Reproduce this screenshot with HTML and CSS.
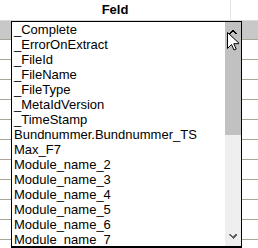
FILE: index.html
```html
<!DOCTYPE html>
<html lang="en">
<head>
    <meta charset="UTF-8">
    <title>Feld</title>
    <link rel="stylesheet" href="styles.css">
</head>
<body>
    <div class="grid">
        <div class="grid-head">
            <div class="cell cell-main">Feld</div>
            <div class="cell cell-rest"></div>
        </div>
        <div class="grid-row selected"></div>
        <div class="grid-row"></div>
        <div class="grid-row"></div>
        <div class="grid-row"></div>
        <div class="grid-row"></div>
        <div class="grid-row"></div>
        <div class="grid-row"></div>
        <div class="grid-row"></div>
        <div class="grid-row"></div>
        <div class="grid-row"></div>
        <div class="grid-row"></div>
        <div class="grid-row"></div>

        <div class="dropdown">
            <ul class="dropdown-list">
                <li>_Complete</li>
                <li>_ErrorOnExtract</li>
                <li>_FileId</li>
                <li>_FileName</li>
                <li>_FileType</li>
                <li>_MetaIdVersion</li>
                <li>_TimeStamp</li>
                <li>Bundnummer.Bundnummer_TS</li>
                <li>Max_F7</li>
                <li>Module_name_2</li>
                <li>Module_name_3</li>
                <li>Module_name_4</li>
                <li>Module_name_5</li>
                <li>Module_name_6</li>
                <li>Module_name_7</li>
            </ul>
            <div class="scrollbar">
                <div class="scroll-thumb">
                    <svg class="arrow-up" viewBox="0 0 8 6" width="8" height="6">
                        <path d="M0 5h2v-1h1v-1h2v1h1v1h2v-1h-1v-1h-1v-1h-1v-1h-2v1h-1v1h-1v1h-1z" fill="#000"/>
                    </svg>
                </div>
                <div class="scroll-track">
                    <svg class="arrow-down" viewBox="0 0 9 6" width="9" height="6">
                        <path d="M0 0h2v1h1v1h1h1v-1h1v-1h2v2h-1v1h-1v1h-1v1h-1v-1h-1v-1h-1v-1h-1z" fill="#606060"/>
                    </svg>
                </div>
            </div>
        </div>

        <svg class="cursor" viewBox="0 0 12 19" width="12" height="19">
            <path d="M0.5 0.5v16l4-4 2.5 5.5 2.2-1-2.4-5.3h5.7z" fill="#fff" stroke="#000" stroke-width="1"/>
        </svg>
    </div>
</body>
</html>
```

FILE: styles.css
```css
* {
    margin: 0;
    padding: 0;
    box-sizing: border-box;
}

body {
    width: 258px;
    height: 248px;
    overflow: hidden;
    background: #fff;
    font-family: "Liberation Sans", Arial, sans-serif;
    font-size: 13px;
    color: #000;
}

.grid {
    position: relative;
    width: 258px;
    height: 248px;
}

.grid-head {
    display: flex;
    height: 21px;
    border-bottom: 1px solid #d8d8d8;
}

.cell {
    height: 20px;
    line-height: 19px;
}

.cell-main {
    width: 231px;
    text-align: center;
    font-weight: bold;
    border-right: 1px solid #e3e3e3;
}

.cell-rest {
    flex: 1;
}

.grid-row {
    height: 20px;
    border-bottom: 1px solid #a9a698;
}

.grid-row.selected {
    height: 19px;
    background: #c8c8c8;
}

.dropdown {
    position: absolute;
    left: 11px;
    top: 21px;
    width: 231px;
    height: 227px;
    border: 1px solid #000;
    border-bottom-width: 2px;
    background: #fff;
    display: flex;
}

.dropdown-list {
    list-style: none;
    flex: 1;
    padding-left: 2px;
}

.dropdown-list li {
    height: 15px;
    line-height: 15px;
    white-space: nowrap;
}

.scrollbar {
    width: 16px;
    display: flex;
    flex-direction: column;
}

.scroll-thumb {
    height: 113px;
    background: #c1c1c1;
    display: flex;
    justify-content: center;
    padding-top: 7px;
}

.scroll-track {
    flex: 1;
    background: #efefef;
    display: flex;
    justify-content: center;
    align-items: flex-end;
    padding-bottom: 6px;
}

.arrow-up, .arrow-down {
    display: block;
}

.cursor {
    position: absolute;
    left: 227px;
    top: 32px;
}
```
